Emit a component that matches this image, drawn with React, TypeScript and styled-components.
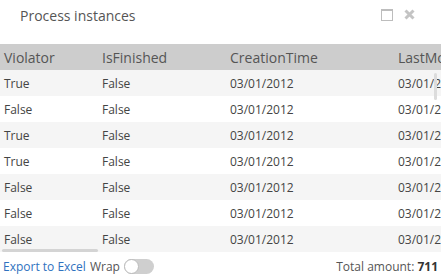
import React from 'react';
import styled, { createGlobalStyle } from 'styled-components';

const GlobalStyle = createGlobalStyle`
  html, body {
    margin: 0;
    padding: 0;
    background: #fff;
    font-family: 'Open Sans', 'Liberation Sans', sans-serif;
  }
`;

const rows = [
  ['True', 'False', '03/01/2012', '03/01/2012'],
  ['False', 'False', '03/01/2012', '03/01/2012'],
  ['True', 'False', '03/01/2012', '03/01/2012'],
  ['True', 'False', '03/01/2012', '03/01/2012'],
  ['False', 'False', '03/01/2012', '03/01/2012'],
  ['False', 'False', '03/01/2012', '03/01/2012'],
  ['False', 'False', '03/01/2012', '03/01/2012'],
];

const columns = ['Violator', 'IsFinished', 'CreationTime', 'LastModified'];
const widths = [98, 128, 168, 140];

const Panel = styled.div`
  width: 441px;
  height: 278px;
  display: flex;
  flex-direction: column;
  overflow: hidden;
`;

const TitleBar = styled.div`
  height: 44px;
  display: flex;
  align-items: flex-start;
  justify-content: space-between;
  padding: 5px 26px 0 20px;
  box-sizing: border-box;
`;

const Title = styled.div`
  font-size: 14px;
  color: #555;
  line-height: 22px;
`;

const Tools = styled.div`
  display: flex;
  gap: 11px;
  padding-top: 4px;
`;

const TableWrap = styled.div`
  position: relative;
  height: 210px;
  overflow: hidden;
`;

const Row = styled.div<{ $bg: string }>`
  display: flex;
  height: 26px;
  align-items: center;
  background: ${(p) => p.$bg};
  width: 534px;
`;

const HeadCell = styled.div<{ $w: number }>`
  flex: 0 0 ${(p) => p.$w}px;
  padding-left: 4px;
  box-sizing: border-box;
  font-size: 14px;
  color: #555;
  white-space: nowrap;
`;

const Cell = styled.div<{ $w: number }>`
  flex: 0 0 ${(p) => p.$w}px;
  padding-left: 4px;
  box-sizing: border-box;
  font-size: 12px;
  color: #444;
  white-space: nowrap;
`;

const HScroll = styled.div`
  position: absolute;
  left: 2px;
  top: 205px;
  width: 96px;
  height: 3px;
  border-radius: 2px;
  background: #d4d4d4;
`;

const VScroll = styled.div`
  position: absolute;
  left: 434px;
  top: 29px;
  width: 3px;
  height: 27px;
  border-radius: 2px;
  background: #dcdcdc;
`;

const Footer = styled.div`
  flex: 1;
  display: flex;
  align-items: center;
  justify-content: space-between;
  padding: 0 3px 0 3px;
  font-size: 12px;
`;

const Left = styled.div`
  display: flex;
  align-items: center;
  gap: 4px;
`;

const Link = styled.a`
  color: #2f72c0;
  text-decoration: none;
`;

const Label = styled.span`
  color: #555;
`;

const Toggle = styled.div`
  width: 30px;
  height: 15px;
  border-radius: 8px;
  background: #cfcfcf;
  position: relative;
`;

const Knob = styled.div`
  position: absolute;
  left: 0;
  top: 0;
  width: 13px;
  height: 13px;
  border-radius: 50%;
  background: #fff;
  border: 1px solid #bbb;
`;

const Total = styled.div`
  color: #555;
  b {
    color: #333;
    font-weight: 700;
  }
`;

export default function App() {
  return (
    <>
      <GlobalStyle />
      <Panel>
        <TitleBar>
          <Title>Process instances</Title>
          <Tools>
            <svg width="12" height="12" viewBox="0 0 12 12">
              <rect x="0.5" y="0.5" width="11" height="11" fill="none" stroke="#bdbdbd" />
              <line x1="0.5" y1="1.5" x2="11.5" y2="1.5" stroke="#bdbdbd" />
            </svg>
            <svg width="11" height="11" viewBox="0 0 11 11">
              <path d="M1.5 1.5 L9.5 9.5 M9.5 1.5 L1.5 9.5" stroke="#c4c4c4" strokeWidth="3" />
            </svg>
          </Tools>
        </TitleBar>
        <TableWrap>
          <Row $bg="#cdcdcd">
            {columns.map((c, i) => (
              <HeadCell key={c} $w={widths[i]}>{c}</HeadCell>
            ))}
          </Row>
          {rows.map((r, ri) => (
            <Row key={ri} $bg={ri % 2 === 0 ? '#f5f5f5' : '#fff'}>
              {r.map((v, i) => (
                <Cell key={i} $w={widths[i]}>{v}</Cell>
              ))}
            </Row>
          ))}
          <HScroll />
          <VScroll />
        </TableWrap>
        <Footer>
          <Left>
            <Link href="#">Export to Excel</Link>
            <Label>Wrap</Label>
            <Toggle>
              <Knob />
            </Toggle>
          </Left>
          <Total>
            Total amount: <b>711</b>
          </Total>
        </Footer>
      </Panel>
    </>
  );
}
